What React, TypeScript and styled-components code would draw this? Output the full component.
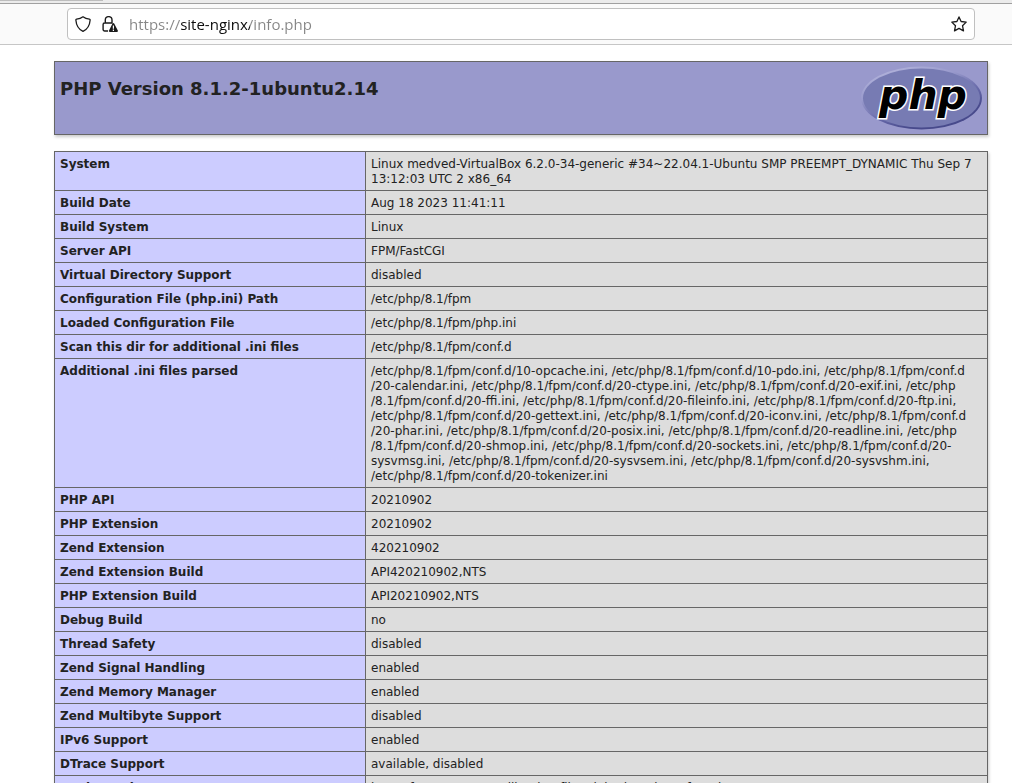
import React from 'react';
import styled, { createGlobalStyle } from 'styled-components';

const GlobalStyle = createGlobalStyle`
  body {
    margin: 0;
    background: #fff;
    color: #222;
    font-family: "DejaVu Sans", sans-serif;
    font-size: 12px;
    line-height: 15px;
  }
`;

const Window = styled.div`
  display: flex;
  flex-direction: column;
  height: 100vh;
  overflow: hidden;
`;

const TabStrip = styled.div`
  flex: none;
  height: 3px;
  background: #ebebeb;
  border-bottom: 1px solid #a0a0a0;
`;

const ActiveTabEdge = styled.div`
  width: 103px;
  height: 1px;
  background: #bdbdbd;
`;

const Toolbar = styled.div`
  flex: none;
  padding: 4px 37px 4px 67px;
  background: #fafafa;
  border-bottom: 1px solid #c6c6c6;
`;

const AddressBar = styled.form`
  display: flex;
  align-items: center;
  box-sizing: border-box;
  height: 32px;
  padding: 0 6px;
  background: #fff;
  border: 1px solid #c0c0c0;
  border-radius: 4px;
`;

const IconButton = styled.button`
  flex: none;
  display: flex;
  width: 18px;
  padding: 1px;
  border: 0;
  background: none;
  color: #1b1b1b;

  & + & {
    margin-left: 9px;
  }
`;

/* The host is emphasised by painting the text with a stepped background. */
const AddressInput = styled.input`
  flex: 1;
  min-width: 0;
  height: 24px;
  margin: 0 8px 0 10px;
  padding: 0;
  border: 0;
  outline: 0;
  font-family: "Open Sans", "Noto Sans", sans-serif;
  font-size: 15px;
  line-height: 24px;
  color: #0c0c0c;
  background: linear-gradient(to right, #868686 52px, #0c0c0c 52px 121px, #868686 121px);
  background-clip: text;
  -webkit-background-clip: text;
  -webkit-text-fill-color: transparent;
`;

const Page = styled.main`
  flex: 1;
  min-height: 0;
  overflow: hidden;
  padding: 16px 24px 0 54px;
`;

const Banner = styled.header`
  display: flex;
  justify-content: space-between;
  padding: 4px 5px;
  background: #99c;
  border: 1px solid #666;
  box-shadow: 1px 2px 3px #ccc;
`;

const Title = styled.h1`
  margin: 12px 0 0;
  font-size: 18px;
  line-height: 21px;
`;

const InfoTable = styled.table`
  width: 100%;
  margin-top: 16px;
  border-collapse: collapse;
  table-layout: fixed;
  box-shadow: 1px 2px 3px #ccc;
`;

const Label = styled.th`
  width: 300px;
  padding: 5px 5px 3px;
  border: 1px solid #666;
  background: #ccf;
  text-align: left;
  vertical-align: top;
`;

const Value = styled.td`
  padding: 5px 5px 3px;
  border: 1px solid #666;
  background: #ddd;
  vertical-align: top;
  white-space: pre-line;
`;

const rows: [string, string][] = [
  ['System', 'Linux medved-VirtualBox 6.2.0-34-generic #34~22.04.1-Ubuntu SMP PREEMPT_DYNAMIC Thu Sep 7\n13:12:03 UTC 2 x86_64'],
  ['Build Date', 'Aug 18 2023 11:41:11'],
  ['Build System', 'Linux'],
  ['Server API', 'FPM/FastCGI'],
  ['Virtual Directory Support', 'disabled'],
  ['Configuration File (php.ini) Path', '/etc/php/8.1/fpm'],
  ['Loaded Configuration File', '/etc/php/8.1/fpm/php.ini'],
  ['Scan this dir for additional .ini files', '/etc/php/8.1/fpm/conf.d'],
  [
    'Additional .ini files parsed',
    [
      '/etc/php/8.1/fpm/conf.d/10-opcache.ini, /etc/php/8.1/fpm/conf.d/10-pdo.ini, /etc/php/8.1/fpm/conf.d',
      '/20-calendar.ini, /etc/php/8.1/fpm/conf.d/20-ctype.ini, /etc/php/8.1/fpm/conf.d/20-exif.ini, /etc/php',
      '/8.1/fpm/conf.d/20-ffi.ini, /etc/php/8.1/fpm/conf.d/20-fileinfo.ini, /etc/php/8.1/fpm/conf.d/20-ftp.ini,',
      '/etc/php/8.1/fpm/conf.d/20-gettext.ini, /etc/php/8.1/fpm/conf.d/20-iconv.ini, /etc/php/8.1/fpm/conf.d',
      '/20-phar.ini, /etc/php/8.1/fpm/conf.d/20-posix.ini, /etc/php/8.1/fpm/conf.d/20-readline.ini, /etc/php',
      '/8.1/fpm/conf.d/20-shmop.ini, /etc/php/8.1/fpm/conf.d/20-sockets.ini, /etc/php/8.1/fpm/conf.d/20-',
      'sysvmsg.ini, /etc/php/8.1/fpm/conf.d/20-sysvsem.ini, /etc/php/8.1/fpm/conf.d/20-sysvshm.ini,',
      '/etc/php/8.1/fpm/conf.d/20-tokenizer.ini',
    ].join('\n'),
  ],
  ['PHP API', '20210902'],
  ['PHP Extension', '20210902'],
  ['Zend Extension', '420210902'],
  ['Zend Extension Build', 'API420210902,NTS'],
  ['PHP Extension Build', 'API20210902,NTS'],
  ['Debug Build', 'no'],
  ['Thread Safety', 'disabled'],
  ['Zend Signal Handling', 'enabled'],
  ['Zend Memory Manager', 'enabled'],
  ['Zend Multibyte Support', 'disabled'],
  ['IPv6 Support', 'enabled'],
  ['DTrace Support', 'available, disabled'],
  ['Registered PHP Streams', 'https, ftps, compress.zlib, php, file, glob, data, http, ftp, phar'],
];

const ShieldIcon = () => (
  <svg width="16" height="16" viewBox="0 0 16 16" fill="none" stroke="currentColor" strokeWidth="1.3" strokeLinejoin="round" aria-hidden="true">
    <path d="M8 .8C6 2.3 3.8 2.9 1.6 3.1 1 3.2.8 3.6.9 4.2 1.3 9.5 3.6 13.3 8 15.3 12.4 13.3 14.7 9.5 15.1 4.2 15.2 3.6 15 3.2 14.4 3.1 12.2 2.9 10 2.3 8 .8Z" />
  </svg>
);

const LockWarningIcon = () => (
  <svg width="16" height="16" viewBox="0 0 16 16" fill="none" aria-hidden="true">
    <path d="M3.3 7V4a3.3 3.3 0 0 1 6.7 0v3M6 15H2.6A1.5 1.5 0 0 1 1.1 13.5V8.500A1.5 1.5 0 0 1 2.6 7H10.7" stroke="currentColor" strokeWidth="1.4" />
    <path d="M10.5 7.6a1 1 0 0 1 1.7 0l3.6 6.9a1 1 0 0 1-.9 1.5H7.9a1 1 0 0 1-.9-1.5Z" fill="currentColor" />
    <path d="M11.4 9.6v3.1M11.4 13.6v1.3" stroke="#fff" strokeWidth="1.2" />
  </svg>
);

const StarIcon = () => (
  <svg width="16" height="16" viewBox="0 0 16 16" fill="none" stroke="currentColor" strokeWidth="1.3" strokeLinejoin="round" aria-hidden="true">
    <path d="M8 .9 10.1 5.5 15.2 6.1 11.5 9.7 12.5 14.9 8 12.4 3.5 14.9 4.5 9.7.8 6.1 5.9 5.5Z" />
  </svg>
);

const PhpLogo = () => (
  <svg width="121" height="64" viewBox="0 0 121 64" role="img" aria-label="PHP logo">
    <defs>
      <linearGradient id="rim" x1="0.2" y1="0" x2="0.8" y2="1">
        <stop offset="0" stopColor="#b4b5dc" />
        <stop offset="0.3" stopColor="#9a9bcd" />
        <stop offset="0.6" stopColor="#6668a8" />
        <stop offset="0.8" stopColor="#484a8c" />
        <stop offset="1" stopColor="#484a8c" />
      </linearGradient>
    </defs>
    <ellipse cx="60.5" cy="32" rx="60.5" ry="31.500" fill="url(#rim)" />
    <ellipse cx="60.5" cy="32" rx="58.5" ry="29.500" fill="#777bb3" />
    <text
      x="62"
      y="43"
      textAnchor="middle"
      fontFamily="DejaVu Sans, sans-serif"
      fontSize="41"
      fontWeight="700"
      fontStyle="italic"
      fill="#000"
      stroke="#fff"
      strokeWidth="3"
      paintOrder="stroke"
    >
      php
    </text>
  </svg>
);

export default function App() {
  return (
    <>
      <GlobalStyle />
      <Window>
        <TabStrip>
          <ActiveTabEdge />
        </TabStrip>
        <Toolbar>
          <AddressBar onSubmit={(event) => event.preventDefault()}>
            <IconButton type="button" aria-label="Tracking protection">
              <ShieldIcon />
            </IconButton>
            <IconButton type="button" aria-label="Connection security">
              <LockWarningIcon />
            </IconButton>
            <AddressInput type="text" aria-label="Address" defaultValue="https://site-nginx/info.php" spellCheck={false} />
            <IconButton type="button" aria-label="Bookmark this page">
              <StarIcon />
            </IconButton>
          </AddressBar>
        </Toolbar>
        <Page>
          <Banner>
            <Title>PHP Version 8.1.2-1ubuntu2.14</Title>
            <PhpLogo />
          </Banner>
          <InfoTable>
            <tbody>
              {rows.map(([label, value]) => (
                <tr key={label}>
                  <Label scope="row">{label}</Label>
                  <Value>{value}</Value>
                </tr>
              ))}
            </tbody>
          </InfoTable>
        </Page>
      </Window>
    </>
  );
}
